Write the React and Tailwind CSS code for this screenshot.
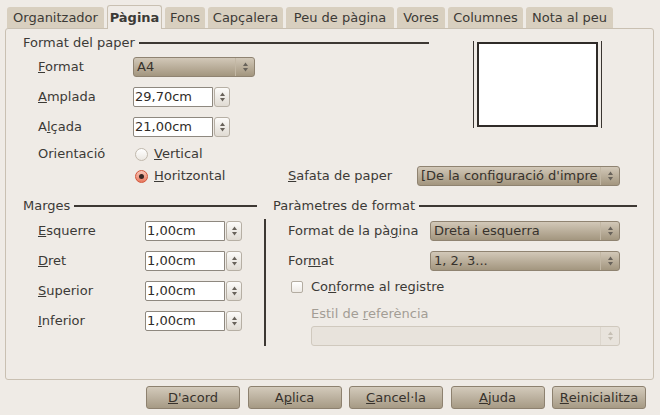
const tabs = [
  { label: "Organitzador", w: "w-[97px]" },
  { label: "Pàgina", w: "w-[55px]", active: true },
  { label: "Fons", w: "w-[40px]" },
  { label: "Capçalera", w: "w-[75px]" },
  { label: "Peu de pàgina", w: "w-[108px]" },
  { label: "Vores", w: "w-[48px]" },
  { label: "Columnes", w: "w-[75px]" },
  { label: "Nota al peu", w: "w-[87px]" },
];

// tiny up/down triangles used by combos and spin buttons
function Arrows({ dim }) {
  const c = dim ? "#c6bfb4" : "#68625a";
  return (
    <svg width="7" height="12" viewBox="0 0 7 12">
      <path d="M3.5 1.5 L6 5 L1 5 Z" fill={c} />
      <path d="M3.5 10.5 L6 7 L1 7 Z" fill={c} />
    </svg>
  );
}

function Combo({ value, className, disabled }) {
  return (
    <div
      className={
        "h-[20px] flex rounded-[3px] border overflow-hidden " +
        (disabled
          ? "border-[#d0c9be] bg-[#e8e3dc] "
          : "border-[#8f8371] bg-linear-to-b from-[#d2c8b8] to-[#a3967f] ") +
        className
      }
    >
      <div className="flex-1 min-w-0 overflow-hidden whitespace-nowrap pl-[3px] leading-[18px] text-[#37322c]">
        {value}
      </div>
      <div
        className={
          "w-[19px] flex items-center justify-center border-l " +
          (disabled ? "border-[#dcd6cd]" : "border-[#c2b7a4]")
        }
      >
        <Arrows dim={disabled} />
      </div>
    </div>
  );
}

function Spin({ value }) {
  return (
    <div className="flex h-[20px]">
      <div className="w-[80px] h-full border border-[#8e887f] rounded-l-[2px] bg-white pl-[1px] leading-[18px] text-[#2f2c28]">
        {value}
      </div>
      <div className="ml-[1px] w-[16px] h-full border border-[#b6afa4] rounded-[3px] bg-linear-to-b from-[#fcfbf9] to-[#e0dbd3] flex items-center justify-center">
        <Arrows />
      </div>
    </div>
  );
}

function Radio({ checked }) {
  if (checked) {
    return (
      <span className="w-[13px] h-[13px] rounded-full border border-[#d2563b] bg-linear-to-b from-[#f8c6b8] to-[#e8795f] flex items-center justify-center">
        <span className="w-[5px] h-[5px] rounded-full bg-[#3a2824]" />
      </span>
    );
  }
  return (
    <span className="w-[13px] h-[13px] rounded-full border border-[#c1b9ad] bg-linear-to-b from-white to-[#ebe7e1]" />
  );
}

function Heading({ children }) {
  return (
    <div className="h-[16px] flex items-center">
      <span className="whitespace-nowrap">{children}</span>
      <div className="ml-[4px] flex-1 h-[2px] bg-[#3d3833]" />
    </div>
  );
}

function Button({ children }) {
  return (
    <div className="w-[94px] h-[23px] rounded-[3px] border border-[#8d816f] bg-linear-to-b from-[#d3cabb] to-[#a69a85] flex items-center justify-center text-[#37322c]">
      {children}
    </div>
  );
}

export default function App() {
  return (
    <div className="w-[660px] h-[415px] bg-[#efebe6] font-['DejaVu_Sans',sans-serif] text-[13px] leading-[16px] text-[#3c3a36] flex flex-col overflow-hidden">
      {/* Tab strip */}
      <div className="h-[28px] flex items-end pl-[7px] gap-[3px]">
        {tabs.map((t) =>
          t.active ? (
            <div
              key={t.label}
              className={t.w + " relative z-10 -mb-px h-[24px] rounded-t-[3px] border border-b-0 border-[#c9c0b2] bg-[#efebe6] font-bold flex items-center justify-center"}
            >
              {t.label}
            </div>
          ) : (
            <div
              key={t.label}
              className={t.w + " h-[21px] rounded-t-[3px] bg-[#d8cfbf] flex items-center justify-center"}
            >
              {t.label}
            </div>
          )
        )}
      </div>

      {/* Page panel */}
      <div className="ml-[5px] w-[649px] h-[352px] border border-[#c9c0b2] rounded-[3px]">
        {/* Format del paper + preview */}
        <div className="flex items-start pl-[17px]">
          <div className="w-[406px] mt-[6px]">
            <Heading>Format del paper</Heading>
            <div className="mt-[6px] pl-[15px] flex flex-col gap-[10px]">
              <div className="h-[20px] flex items-center">
                <div className="w-[95px]"><u>F</u>ormat</div>
                <Combo value="A4" className="w-[122px]" />
              </div>
              <div className="h-[20px] flex items-center">
                <div className="w-[95px]"><u>A</u>mplada</div>
                <Spin value="29,70cm" />
              </div>
              <div className="h-[20px] flex items-center">
                <div className="w-[95px]">A<u>l</u>çada</div>
                <Spin value="21,00cm" />
              </div>
            </div>
          </div>
          <div className="mt-[12px] ml-[44px] w-[129px] h-[87px] border-x border-[#3a3531] px-[3px] py-[1px]">
            <div className="h-full border-2 border-[#2f2b28] bg-white" />
          </div>
        </div>

        {/* Orientation + paper tray */}
        <div className="mt-[7px] pl-[32px]">
          <div className="h-[20px] flex items-center">
            <div className="w-[95px]">Orientació</div>
            <div className="flex items-center ml-[2px]">
              <Radio />
              <span className="ml-[6px]"><u>V</u>ertical</span>
            </div>
          </div>
          <div className="mt-[2px] h-[20px] flex items-center">
            <div className="w-[95px]" />
            <div className="w-[155px] flex items-center">
              <span className="ml-[2px] flex"><Radio checked /></span>
              <span className="ml-[6px]"><u>H</u>oritzontal</span>
            </div>
            <div className="w-[129px]"><u>S</u>afata de paper</div>
            <Combo value="[De la configuració d'impre" className="w-[203px]" />
          </div>
        </div>

        {/* Margins + layout settings */}
        <div className="mt-[12px] flex pl-[17px]">
          <div className="w-[234px]">
            <Heading>Marges</Heading>
            <div className="mt-[7px] pl-[15px] flex flex-col gap-[10px]">
              {[
                [<><u>E</u>squerre</>, "e"],
                [<><u>D</u>ret</>, "d"],
                [<><u>S</u>uperior</>, "s"],
                [<><u>I</u>nferior</>, "i"],
              ].map(([label, k]) => (
                <div key={k} className="h-[20px] flex items-center">
                  <div className="w-[107px]">{label}</div>
                  <Spin value="1,00cm" />
                </div>
              ))}
            </div>
          </div>

          <div className="ml-[7px] w-[373px]">
            <div className="pl-[9px]">
              <Heading>Paràmetres de format</Heading>
            </div>
            <div className="mt-[5px] h-[127px] border-l-2 border-[#3d3833] pl-[22px] pt-[2px]">
              <div className="h-[20px] flex items-center">
                <div className="w-[142px]">Format de la pà<u>g</u>ina</div>
                <Combo value="Dreta i esquerra" className="w-[190px]" />
              </div>
              <div className="mt-[10px] h-[20px] flex items-center">
                <div className="w-[142px]">For<u>m</u>at</div>
                <Combo value="1, 2, 3..." className="w-[190px]" />
              </div>
              <div className="mt-[8px] h-[16px] flex items-center">
                <span className="ml-[3px] w-[12px] h-[12px] rounded-[2px] border border-[#b3aca1] bg-linear-to-b from-white to-[#eeeae5]" />
                <span className="ml-[8px]">Co<u>n</u>forme al registre</span>
              </div>
              <div className="mt-[11px] h-[16px] pl-[23px] text-[#a39d95]">
                Estil de <u>r</u>eferència
              </div>
              <Combo value="" disabled className="mt-[4px] ml-[23px] w-[309px]" />
            </div>
          </div>
        </div>
      </div>

      {/* Dialog buttons */}
      <div className="mt-[6px] flex justify-end pr-[14px] gap-[7.5px]">
        <Button><u>D</u>'acord</Button>
        <Button>A<u>p</u>lica</Button>
        <Button><u>C</u>ancel·la</Button>
        <Button><u>A</u>juda</Button>
        <Button><u>R</u>einicialitza</Button>
      </div>
    </div>
  );
}
